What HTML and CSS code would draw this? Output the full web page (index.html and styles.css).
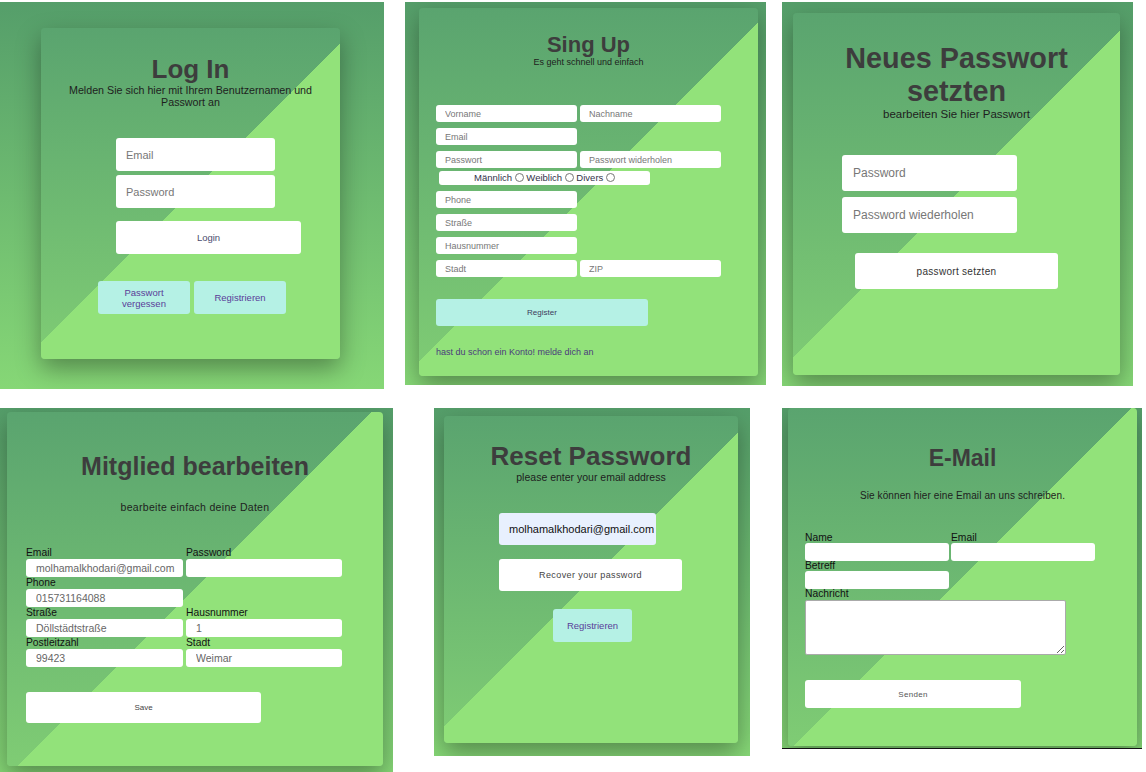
FILE: index.html
```html
<!DOCTYPE html>
<html lang="de">
<head>
    <meta charset="UTF-8">
    <meta name="viewport" content="width=device-width, initial-scale=1.0">
    <title>Formulare</title>
    <link rel="stylesheet" href="styles.css">
</head>
<body>
    <!-- Obere Reihe -->
    <div class="row row-top">

        <!-- Log In -->
        <section class="shot shot-login">
            <div class="card card-login">
                <h1 class="title">Log In</h1>
                <p class="lead">Melden Sie sich hier mit Ihrem Benutzernamen und Passwort an</p>
                <input class="field" type="text" placeholder="Email">
                <input class="field field-next" type="password" placeholder="Password">
                <button class="btn btn-white btn-login">Login</button>
                <div class="btn-pair">
                    <a class="btn btn-aqua" href="#">Passwort<br>vergessen</a>
                    <a class="btn btn-aqua" href="#">Registrieren</a>
                </div>
            </div>
        </section>

        <!-- Sign Up -->
        <section class="shot shot-signup">
            <div class="card card-signup">
                <h1 class="title">Sing Up</h1>
                <p class="lead">Es geht schnell und einfach</p>
                <form class="signup-form">
                    <div class="pair">
                        <input class="field" type="text" placeholder="Vorname">
                        <input class="field" type="text" placeholder="Nachname">
                    </div>
                    <div class="pair">
                        <input class="field" type="text" placeholder="Email">
                    </div>
                    <div class="pair">
                        <input class="field" type="password" placeholder="Passwort">
                        <input class="field" type="password" placeholder="Passwort widerholen">
                    </div>
                    <div class="gender">
                        Männlich <span class="radio"></span> Weiblich <span class="radio"></span> Divers <span class="radio"></span>
                    </div>
                    <div class="pair pair-after-gender">
                        <input class="field" type="text" placeholder="Phone">
                    </div>
                    <div class="pair">
                        <input class="field" type="text" placeholder="Straße">
                    </div>
                    <div class="pair">
                        <input class="field" type="text" placeholder="Hausnummer">
                    </div>
                    <div class="pair">
                        <input class="field" type="text" placeholder="Stadt">
                        <input class="field" type="text" placeholder="ZIP">
                    </div>
                    <button class="btn btn-aqua btn-register" type="button">Register</button>
                </form>
                <a class="signin-link" href="#">hast du schon ein Konto! melde dich an</a>
            </div>
        </section>

        <!-- Neues Passwort -->
        <section class="shot shot-newpass">
            <div class="card card-newpass">
                <h1 class="title">Neues Passwort setzten</h1>
                <p class="lead">bearbeiten Sie hier Passwort</p>
                <input class="field" type="password" placeholder="Password">
                <input class="field field-next" type="password" placeholder="Password wiederholen">
                <button class="btn btn-white">passwort setzten</button>
            </div>
        </section>
    </div>

    <!-- Untere Reihe -->
    <div class="row row-bottom">

        <!-- Mitglied bearbeiten -->
        <section class="shot shot-member">
            <div class="card card-member">
                <h1 class="title">Mitglied bearbeiten</h1>
                <p class="lead">bearbeite einfach deine Daten</p>
                <form class="member-form">
                    <div class="frow">
                        <label class="fcol">Email<input class="field" type="text" value="molhamalkhodari@gmail.com"></label>
                        <label class="fcol">Password<input class="field field-narrow" type="password"></label>
                    </div>
                    <div class="frow">
                        <label class="fcol">Phone<input class="field" type="text" value="015731164088"></label>
                    </div>
                    <div class="frow">
                        <label class="fcol">Straße<input class="field" type="text" value="Döllstädtstraße"></label>
                        <label class="fcol">Hausnummer<input class="field field-narrow" type="text" value="1"></label>
                    </div>
                    <div class="frow">
                        <label class="fcol">Postleitzahl<input class="field" type="text" value="99423"></label>
                        <label class="fcol">Stadt<input class="field field-narrow" type="text" value="Weimar"></label>
                    </div>
                    <button class="btn btn-white btn-save" type="button">Save</button>
                </form>
            </div>
        </section>

        <!-- Reset Password -->
        <section class="shot shot-reset">
            <div class="card card-reset">
                <h1 class="title">Reset Password</h1>
                <p class="lead">please enter your email address</p>
                <input class="field field-filled" type="text" value="molhamalkhodari@gmail.com">
                <button class="btn btn-white btn-recover">Recover your password</button>
                <a class="btn btn-aqua btn-reg" href="#">Registrieren</a>
            </div>
        </section>

        <!-- E-Mail -->
        <section class="shot shot-mail">
            <div class="card card-mail">
                <h1 class="title">E-Mail</h1>
                <p class="lead">Sie können hier eine Email an uns schreiben.</p>
                <form class="mail-form">
                    <div class="frow">
                        <label class="fcol">Name<input class="field" type="text"></label>
                        <label class="fcol">Email<input class="field" type="text"></label>
                    </div>
                    <label class="fcol">Betreff<input class="field" type="text"></label>
                    <label class="fcol">Nachricht<textarea class="message"></textarea></label>
                    <button class="btn btn-white btn-send" type="button">Senden</button>
                </form>
            </div>
        </section>
    </div>
</body>
</html>
```

FILE: styles.css
```css
body {
    margin: 0;
    background-color: #ffffff;
    font-family: 'Liberation Sans', Arial, sans-serif;
    color: #222;
}

.row {
    display: flex;
    align-items: flex-start;
}

.row-top {
    padding-top: 2px;
}

.row-bottom {
    margin-top: 19px;
}

/* Screenshot frame */
.shot {
    box-sizing: border-box;
    background: linear-gradient(#559e6a, #86d776);
    overflow: hidden;
}

/* Card with diagonal split */
.card {
    box-sizing: border-box;
    border-radius: 4px;
    background:
        linear-gradient(135deg, transparent 50%, #92e27a 50%),
        linear-gradient(#5aa46f, #7fcc74);
    box-shadow: 0 10px 24px rgba(0, 0, 0, 0.35);
}

.title {
    margin: 0;
    text-align: center;
    font-weight: bold;
    color: #3d3d3d;
}

.lead {
    margin: 0;
    text-align: center;
    color: #1e1e1e;
}

.field {
    display: block;
    box-sizing: border-box;
    border: none;
    border-radius: 3px;
    background: #ffffff;
    font-family: 'Liberation Sans', Arial, sans-serif;
    color: #666;
    outline: none;
}

.field::placeholder {
    color: #777;
}

.btn {
    display: flex;
    align-items: center;
    justify-content: center;
    box-sizing: border-box;
    border: none;
    border-radius: 3px;
    padding: 0;
    font-family: 'Liberation Sans', Arial, sans-serif;
    text-align: center;
    text-decoration: none;
    cursor: pointer;
}

.btn-white {
    background: #ffffff;
    color: #444;
}

.btn-aqua {
    background: #b5f1e5;
    color: #5a3d99;
}

/* Log In */
.shot-login {
    width: 384px;
    height: 387px;
    padding: 26px 0 0 41px;
}

.card-login {
    width: 299px;
    height: 331px;
    padding-top: 26px;
}

.card-login .title {
    font-size: 26px;
    line-height: 30px;
}

.card-login .lead {
    width: 262px;
    margin: 0 auto;
    font-size: 10.7px;
    line-height: 12px;
}

.card-login .field {
    margin: 30px 0 0 75px;
    width: 159px;
    height: 33px;
    padding-left: 10px;
    font-size: 11px;
}

.card-login .field-next {
    margin-top: 4px;
}

.btn-login {
    margin: 13px 0 0 75px;
    width: 185px;
    height: 33px;
    font-size: 9.5px;
    color: #4b4b6e;
}

.btn-pair {
    display: flex;
    gap: 4px;
    margin: 27px 0 0 57px;
}

.btn-pair .btn {
    width: 92px;
    height: 33px;
    font-size: 9.5px;
    line-height: 11px;
}

/* Sign Up */
.shot-signup {
    width: 361px;
    height: 383px;
    margin-left: 21px;
    padding: 6px 0 0 14px;
}

.card-signup {
    width: 339px;
    height: 368px;
    padding: 25px 17px 0;
}

.card-signup .title {
    font-size: 22px;
    line-height: 24px;
}

.card-signup .lead {
    font-size: 9px;
    line-height: 10px;
}

.signup-form {
    margin-top: 38px;
}

.pair {
    display: flex;
    gap: 3px;
    margin-top: 6px;
}

.pair:first-child {
    margin-top: 0;
}

.pair .field {
    width: 141px;
    height: 17px;
    padding-left: 9px;
    font-size: 9px;
}

.gender {
    box-sizing: border-box;
    width: 211px;
    height: 14px;
    margin: 3px 0 0 3px;
    border-radius: 3px;
    background: #ffffff;
    font-size: 9.5px;
    line-height: 14px;
    text-align: center;
    color: #33334a;
}

.radio {
    display: inline-block;
    width: 7px;
    height: 7px;
    border: 1px solid #777;
    border-radius: 50%;
    vertical-align: -1px;
}

.pair-after-gender {
    margin-top: 6px;
}

.btn-register {
    margin-top: 22px;
    width: 212px;
    height: 27px;
    font-size: 8px;
    color: #3c3c5c;
}

.signin-link {
    display: block;
    margin-top: 21px;
    font-size: 9px;
    line-height: 11px;
    color: #4b3c7c;
    text-decoration: none;
}

/* Neues Passwort */
.shot-newpass {
    width: 351px;
    height: 384px;
    margin-left: 16px;
    padding: 11px 0 0 11px;
}

.card-newpass {
    width: 327px;
    height: 362px;
    padding-top: 29px;
}

.card-newpass .title {
    width: 280px;
    margin: 0 auto;
    font-size: 28.8px;
    line-height: 33px;
}

.card-newpass .lead {
    font-size: 11.5px;
    line-height: 13px;
}

.card-newpass .field {
    margin: 34px 0 0 49px;
    width: 175px;
    height: 36px;
    padding-left: 11px;
    font-size: 12px;
}

.card-newpass .field-next {
    margin-top: 6px;
}

.card-newpass .btn {
    margin: 20px 0 0 62px;
    width: 203px;
    height: 36px;
    font-size: 10px;
    letter-spacing: 0.3px;
    color: #333;
}

/* Mitglied bearbeiten */
.shot-member {
    width: 393px;
    height: 364px;
    padding: 4px 0 0 7px;
}

.card-member {
    width: 376px;
    height: 354px;
    padding: 41px 0 0 19px;
}

.card-member .title {
    margin-left: -19px;
    font-size: 25px;
    line-height: 27px;
}

.card-member .lead {
    margin: 21px 0 0 -19px;
    font-size: 10.5px;
    line-height: 12px;
    letter-spacing: 0.3px;
}

.member-form {
    margin-top: 34px;
}

.frow {
    display: flex;
    gap: 3px;
}

.fcol {
    display: block;
    font-size: 10.3px;
    line-height: 12px;
    color: #111;
}

.member-form .field {
    width: 157px;
    height: 18px;
    padding-left: 10px;
    font-size: 10.5px;
}

.member-form .field-narrow {
    width: 156px;
}

.btn-save {
    margin-top: 25px;
    width: 235px;
    height: 31px;
    font-size: 8px;
}

/* Reset Password */
.shot-reset {
    width: 316px;
    height: 348px;
    margin-left: 41px;
    padding: 8px 0 0 10px;
}

.card-reset {
    width: 294px;
    height: 327px;
    padding-top: 25px;
}

.card-reset .title {
    font-size: 26px;
    line-height: 30px;
}

.card-reset .lead {
    font-size: 10.5px;
    line-height: 13px;
}

.field-filled {
    margin: 29px 0 0 55px;
    width: 157px;
    height: 32px;
    padding-left: 10px;
    background: #e8f0fe;
    font-size: 11px;
    color: #111;
}

.btn-recover {
    margin: 14px 0 0 55px;
    width: 183px;
    height: 32px;
    font-size: 9px;
    letter-spacing: 0.4px;
}

.btn-reg {
    margin: 18px 0 0 109px;
    width: 79px;
    height: 33px;
    font-size: 9.5px;
}

/* E-Mail */
.shot-mail {
    width: 360px;
    height: 341px;
    margin-left: 32px;
    padding-left: 6px;
    border-bottom: 1px solid #111;
}

.card-mail {
    width: 349px;
    height: 338px;
    padding: 37px 0 0 17px;
}

.card-mail .title {
    margin-left: -17px;
    font-size: 23px;
    line-height: 27px;
}

.card-mail .lead {
    margin: 18px 0 0 -17px;
    font-size: 10px;
    line-height: 12px;
    letter-spacing: 0.1px;
}

.mail-form {
    margin-top: 31px;
}

.mail-form .frow {
    gap: 2px;
}

.mail-form .fcol {
    line-height: 10px;
}

.mail-form .field {
    width: 144px;
    height: 18px;
}

.message {
    display: block;
    box-sizing: border-box;
    width: 261px;
    height: 55px;
    margin-top: 1px;
    border: 1px solid #aaa;
    border-radius: 2px;
    background: #fff;
    font-family: 'Liberation Sans', Arial, sans-serif;
}

.btn-send {
    margin-top: 25px;
    width: 216px;
    height: 28px;
    font-size: 8px;
    letter-spacing: 0.3px;
    color: #555;
}
```
